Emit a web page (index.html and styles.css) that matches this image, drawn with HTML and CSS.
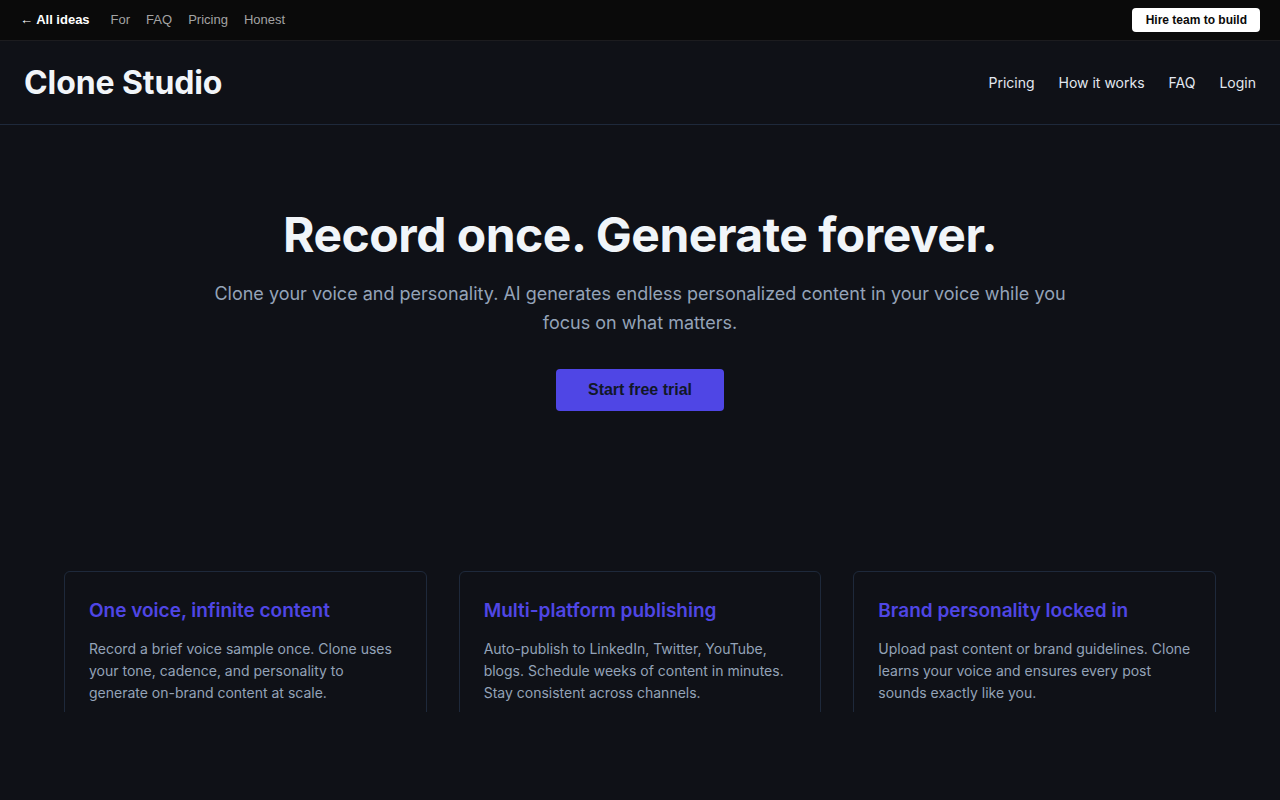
FILE: index.html
```html
<!DOCTYPE html>
<html lang="en">
<head>
    <meta charset="UTF-8">
    <meta name="viewport" content="width=device-width, initial-scale=1.0">
    <title>Clone Studio</title>
    <link rel="stylesheet" href="styles.css">
</head>
<body>
    <div class="topbar">
        <div class="topbar-links">
            <a href="#" class="back">&larr; All ideas</a>
            <a href="#">For</a>
            <a href="#">FAQ</a>
            <a href="#">Pricing</a>
            <a href="#">Honest</a>
        </div>
        <a href="#" class="hire">Hire team to build</a>
    </div>

    <div class="page">
        <header class="site-header">
            <div class="logo">Clone Studio</div>
            <nav class="main-nav">
                <a href="#">Pricing</a>
                <a href="#">How it works</a>
                <a href="#">FAQ</a>
                <a href="#">Login</a>
            </nav>
        </header>

        <section class="hero">
            <h1>Record once. Generate forever.</h1>
            <p class="lead">Clone your voice and personality. AI generates endless personalized content in your voice while you focus on what matters.</p>
            <button class="cta">Start free trial</button>
        </section>

        <section class="features">
            <div class="card">
                <h3>One voice, infinite content</h3>
                <p>Record a brief voice sample once. Clone uses your tone, cadence, and personality to generate on-brand content at scale.</p>
            </div>
            <div class="card">
                <h3>Multi-platform publishing</h3>
                <p>Auto-publish to LinkedIn, Twitter, YouTube, blogs. Schedule weeks of content in minutes. Stay consistent across channels.</p>
            </div>
            <div class="card">
                <h3>Brand personality locked in</h3>
                <p>Upload past content or brand guidelines. Clone learns your voice and ensures every post sounds exactly like you.</p>
            </div>
        </section>
    </div>
</body>
</html>
```
FILE: styles.css
```css
body {
    margin: 0;
    background-color: #0f1117;
    font-family: Inter, "Noto Sans", sans-serif;
    color: #e2e8f0;
}
a {
    text-decoration: none;
}

/* idea gallery strip */
.topbar {
    box-sizing: border-box;
    height: 41px;
    display: flex;
    align-items: center;
    justify-content: space-between;
    padding: 0 20px 1px;
    background-color: #0a0a0a;
    border-bottom: 1px solid #1c1c1f;
    font-family: "Liberation Sans", Arial, sans-serif;
    font-size: 13px;
}
.topbar-links {
    display: flex;
    gap: 16px;
}
.topbar-links a {
    color: #a3a3a3;
}
.topbar-links .back {
    color: #fff;
    font-weight: bold;
    margin-right: 5px;
}
.hire {
    background-color: #fff;
    color: #0a0a0a;
    font-weight: bold;
    font-size: 12px;
    padding: 5px 13px 5px 14px;
    border-radius: 4px;
}

.page {
    height: 671px;
    overflow: hidden;
}

.site-header {
    height: 83px;
    display: flex;
    align-items: center;
    justify-content: space-between;
    padding: 0 24px;
    border-bottom: 1px solid #1e293b;
}
.logo {
    font-size: 32px;
    font-weight: 700;
    color: #f1f5f9;
    letter-spacing: -0.1px;
}
.main-nav {
    display: flex;
    gap: 24px;
}
.main-nav a {
    color: #e2e8f0;
    font-size: 14px;
}

.hero {
    text-align: center;
    padding: 80px 24px 0;
}
.hero h1 {
    margin: 0;
    font-size: 48px;
    font-weight: 700;
    color: #f1f5f9;
    letter-spacing: -0.5px;
    line-height: 60px;
}
.lead {
    max-width: 860px;
    margin: 14px auto 0;
    font-size: 18px;
    line-height: 29px;
    color: #94a3b8;
}
.cta {
    margin-top: 32px;
    width: 168px;
    height: 42px;
    border: none;
    border-radius: 4px;
    background-color: #4f46e5;
    color: #111827;
    font-family: "Liberation Sans", Arial, sans-serif;
    font-size: 16px;
    font-weight: bold;
    cursor: pointer;
}

.features {
    display: grid;
    grid-template-columns: repeat(3, 1fr);
    gap: 32px;
    max-width: 1152px;
    margin: 160px auto 0;
}
.card {
    border: 1px solid #1e293b;
    border-radius: 6px;
    padding: 24px;
    height: 200px;
}
.card h3 {
    margin: 0;
    font-size: 19px;
    font-weight: 600;
    color: #4f46e5;
    line-height: 30px;
}
.card p {
    margin: 12px 0 0;
    font-size: 14px;
    line-height: 22px;
    color: #94a3b8;
}
```
